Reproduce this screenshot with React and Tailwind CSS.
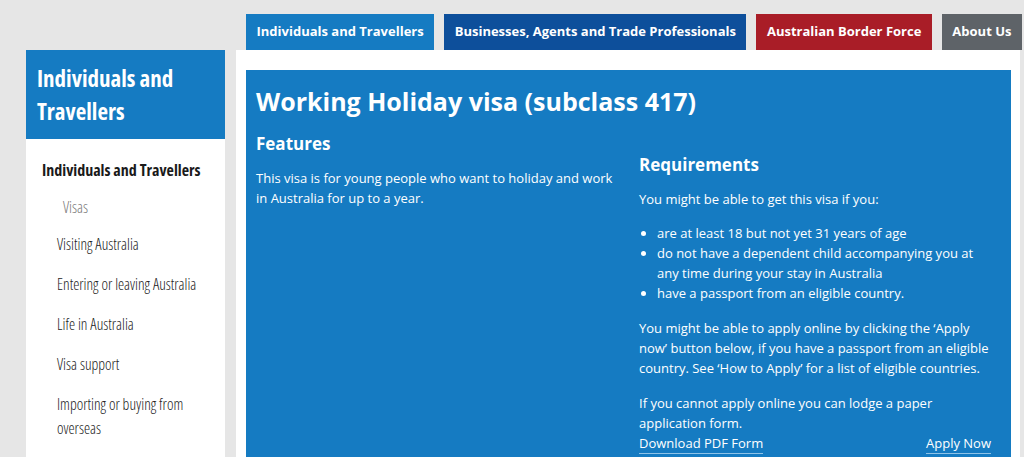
const tabs = [
  { label: 'Individuals and Travellers', bg: 'bg-[#157bc2]' },
  { label: 'Businesses, Agents and Trade Professionals', bg: 'bg-[#0d4f9b]' },
  { label: 'Australian Border Force', bg: 'bg-[#a91d27]' },
  { label: 'About Us', bg: 'bg-[#5e6368]' },
];

const sideLinks = [
  'Visiting Australia',
  'Entering or leaving Australia',
  'Life in Australia',
  'Visa support',
  'Importing or buying from overseas',
];

function SideNav() {
  return (
    <aside className="w-[199px] shrink-0 bg-white font-stretch-[75%]">
      <div className="h-[89px] bg-[#157bc2] px-[11px] pt-[12px]">
        <h2 className="text-[23px] font-bold leading-[33px] text-white">Individuals and Travellers</h2>
      </div>
      <div className="pl-[16px] pr-[10px] pt-[20px]">
        <p className="text-[16px] font-bold leading-[22px] text-[#1a1a1a]">Individuals and Travellers</p>
        <p className="mt-[15px] pl-[21px] text-[15.5px] font-[350] leading-[22px] text-[#777]">Visas</p>
        <ul className="-mt-[2px] pl-[15px]">
          {sideLinks.map((s) => (
            <li key={s} className="mt-[16px] text-[15.5px] font-[350] leading-[24px] text-[#222]">{s}</li>
          ))}
        </ul>
      </div>
    </aside>
  );
}

export default function App() {
  return (
    <div className="min-h-screen overflow-hidden bg-[#e6e6e6] font-['Open_Sans',sans-serif]">
      <nav className="flex gap-[10px] pl-[246px] pt-[14px]">
        {tabs.map((t) => (
          <a
            key={t.label}
            className={`${t.bg} flex h-[36px] shrink-0 items-center whitespace-nowrap px-[10.5px] text-[13px] font-bold text-white`}
          >
            {t.label}
          </a>
        ))}
      </nav>
      <div className="flex pl-[26px]">
        <SideNav />
        <main className="ml-[11px] w-[784px] bg-white pl-[10px] pr-[9px] pt-[20px]">
          <section className="min-h-[400px] bg-[#157bc2] pl-[10px] pr-[20px] pt-[14px] text-white">
            <h1 className="text-[25px] font-bold leading-[34px]">Working Holiday visa (subclass 417)</h1>
            <div className="flex text-[13px] leading-[20px]">
              <div className="w-[383px] pr-[18px] pt-[14px]">
                <h3 className="text-[17px] font-bold leading-[24px]">Features</h3>
                <p className="mt-[12px]">
                  This visa is for young people who want to holiday and work in Australia for up to a year.
                </p>
              </div>
              <div className="flex-1 pt-[35px]">
                <h3 className="text-[17px] font-bold leading-[24px]">Requirements</h3>
                <p className="mt-[12px]">You might be able to get this visa if you:</p>
                <ul className="mt-[14px] list-disc pl-[18px]">
                  <li>are at least 18 but not yet 31 years of age</li>
                  <li>do not have a dependent child accompanying you at any time during your stay in Australia</li>
                  <li>have a passport from an eligible country.</li>
                </ul>
                <p className="mt-[15px]">
                  You might be able to apply online by clicking the ‘Apply now’ button below, if you have a passport
                  from an eligible country. See ‘How to Apply’ for a list of eligible countries.
                </p>
                <p className="mt-[15px]">If you cannot apply online you can lodge a paper application form.</p>
                <div className="flex justify-between">
                  <a className="border-b border-[#8ec3e8] leading-[20px]">Download PDF Form</a>
                  <a className="border-b border-[#8ec3e8] leading-[20px]">Apply Now</a>
                </div>
              </div>
            </div>
          </section>
        </main>
      </div>
    </div>
  );
}
